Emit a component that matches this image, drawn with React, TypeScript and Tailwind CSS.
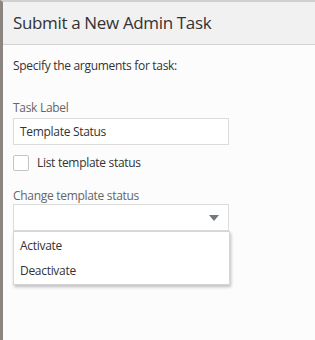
export default function App() {
  return (
    <div className="h-[340px] w-[315px] flex flex-col border-l-[3px] border-t-2 border-l-[#8a8580] border-t-[#cfcfcf] bg-[#fcfcfc] font-['Open_Sans',sans-serif] text-[#333] tracking-[-0.3px]">
      <div className="h-[43px] flex items-center px-[10px] bg-[#f1f1f1] border-b border-[#d2d2d2]">
        <h1 className="text-[17px] text-[#333] tracking-[-0.35px]">Submit a New Admin Task</h1>
      </div>
      <div className="px-[10px] pt-[13px]">
        <p className="text-[12px] leading-[16px]">Specify the arguments for task:</p>

        <label className="block mt-[26px] text-[12px] leading-[16px] text-[#666]">Task Label</label>
        <div className="mt-[2px] w-[216px] h-[27px] border border-[#dcdcdc] bg-white flex items-center px-[6px] text-[12px]">
          Template Status
        </div>

        <div className="mt-[9px] flex items-center gap-[8px]">
          <div className="w-[16px] h-[16px] border border-[#c4c4c4] rounded-[2px] bg-white" />
          <span className="text-[12px] text-[#333]">List template status</span>
        </div>

        <label className="block mt-[16px] text-[12px] leading-[16px] text-[#666]">Change template status</label>
        <div className="mt-0 w-[216px]">
          <div className="h-[27px] border border-[#dcdcdc] bg-white flex items-center justify-end pr-[9px]">
            <svg width="10" height="6" viewBox="0 0 10 6">
              <path d="M0 0h10L5 6z" fill="#6f7a82" />
            </svg>
          </div>
          <div className="w-[217px] border border-[#d6d6d6] bg-white shadow-[1px_2px_3px_rgba(0,0,0,0.25)] py-[1px]">
            <div className="h-[25px] flex items-center px-[6px] text-[12px]">Activate</div>
            <div className="h-[25px] flex items-center px-[6px] text-[12px]">Deactivate</div>
          </div>
        </div>
      </div>
    </div>
  );
}
